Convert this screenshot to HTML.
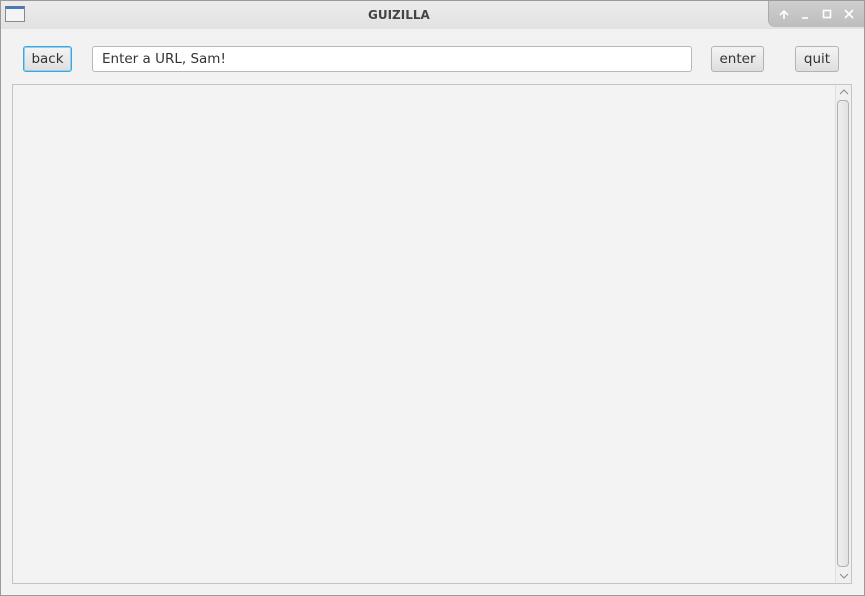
<!DOCTYPE html>
<html><head><style>
*{margin:0;padding:0;box-sizing:border-box}
body{width:865px;height:596px;background:#f2f2f2;font-family:"DejaVu Sans","Liberation Sans",sans-serif;position:relative;overflow:hidden}
.frame{position:absolute;left:0;top:0;width:865px;height:596px;border:1px solid #9a9a9a;pointer-events:none}
.tb{position:absolute;left:0;top:0;width:865px;height:29px;background:linear-gradient(#ececec,#e2e2e2);}
.title{position:absolute;left:368px;top:8px;font-size:12px;font-weight:bold;color:#444}
.wicon{position:absolute;left:5px;top:6px;width:20px;height:16px;border:1px solid #8a8a8a;background:#f4f4f4;border-top:3px solid #4a78b8}
.ctl{position:absolute;left:768px;top:0;width:97px;height:27px;background:linear-gradient(#cfcfcf,#bdbdbd);border-bottom-left-radius:7px;border-left:1px solid #aaa}
.btn{position:absolute;height:26px;border:1px solid #b3b3b3;border-radius:3px;background:linear-gradient(#f4f4f4,#dedede);font-size:13.5px;color:#333;text-align:center;line-height:25px}
.inp{position:absolute;left:92px;top:46px;width:600px;height:26px;border:1px solid #b8b8b8;border-radius:3px;background:#fff;font-size:13.5px;color:#333;padding-left:9px;line-height:25px}
.view{position:absolute;left:12px;top:84px;width:840px;height:500px;border:1px solid #c4c4c4;background:#f3f3f3}
.sb{position:absolute;right:0;top:0;width:16px;height:498px;background:#f0f0f0;border-left:1px solid #e0e0e0}
.thumb{position:absolute;left:1px;top:15px;width:12px;height:467px;border:1px solid #b0b0b0;border-radius:4px;background:linear-gradient(90deg,#eee,#e2e2e2)}
</style></head><body>
<div class="tb"><div class="wicon"></div><div class="title">GUIZILLA</div>
<div class="ctl"><svg width="97" height="27" style="position:absolute;left:0;top:0" fill="none" stroke="#fff" stroke-width="1.6">
<path d="M15 19V11M11 15l4-4 4 4"/><path d="M33 18h6"/><rect x="54.5" y="10.5" width="7" height="7"/><path d="M76 10l8 8M84 10l-8 8"/></svg></div></div>
<div class="btn" style="left:23px;top:46px;width:49px;border:1px solid #3fa6db;box-shadow:0 0 0 1px #8fd0f0 inset">back</div>
<div class="inp">Enter a URL, Sam!</div>
<div class="btn" style="left:711px;top:46px;width:53px">enter</div>
<div class="btn" style="left:795px;top:46px;width:44px">quit</div>
<div class="view"><div class="sb">
<svg width="16" height="498" style="position:absolute;left:0;top:0" fill="none" stroke="#888" stroke-width="1"><path d="M4 9l4-4 4 4"/><path d="M4 489l4 4 4-4"/></svg>
<div class="thumb"></div></div></div>
<div class="frame"></div>
</body></html>
